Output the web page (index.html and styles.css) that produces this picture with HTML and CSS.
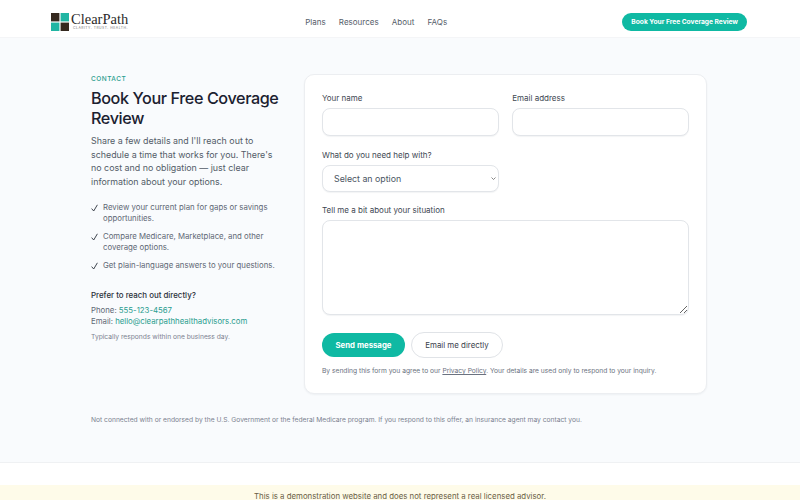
FILE: index.html
```html
<!DOCTYPE html>
<html lang="en">
<head>
<meta charset="utf-8">
<title>ClearPath</title>
<link rel="stylesheet" href="styles.css">
</head>
<body>
<header class="site-header">
  <a class="logo" href="#">
    <svg class="logo-mark" width="18" height="18" viewBox="0 0 18 18" aria-hidden="true">
      <rect x="0" y="0" width="8.4" height="8.4" fill="#35291f"/>
      <rect x="9.6" y="0" width="8.4" height="8.4" fill="#21b5a3"/>
      <rect x="0" y="9.6" width="8.4" height="8.4" fill="#21b5a3"/>
      <rect x="9.6" y="9.6" width="8.4" height="8.4" fill="#35291f"/>
    </svg>
    <span class="logo-text">
      <span class="logo-name">ClearPath</span>
      <span class="logo-tag">CLARITY. TRUST. HEALTH.</span>
    </span>
  </a>
  <nav class="nav">
    <a href="#">Plans</a>
    <a href="#">Resources</a>
    <a href="#">About</a>
    <a href="#">FAQs</a>
  </nav>
  <a class="header-cta" href="#">Book Your Free Coverage Review</a>
</header>
<main class="main">
  <div class="columns">
    <section class="intro">
      <div class="eyebrow">CONTACT</div>
      <h1>Book Your Free Coverage Review</h1>
      <p class="lead">Share a few details and I'll reach out to schedule a time that works for you. There's no cost and no obligation — just clear information about your options.</p>
      <ul class="checks">
        <li><svg class="tick" width="7" height="8" viewBox="0 0 7 8" aria-hidden="true"><path d="M0.6 4.6 L2.7 7 L6.4 0.8"/></svg><span>Review your current plan for gaps or savings opportunities.</span></li>
        <li><svg class="tick" width="7" height="8" viewBox="0 0 7 8" aria-hidden="true"><path d="M0.6 4.6 L2.7 7 L6.4 0.8"/></svg><span>Compare Medicare, Marketplace, and other coverage options.</span></li>
        <li><svg class="tick" width="7" height="8" viewBox="0 0 7 8" aria-hidden="true"><path d="M0.6 4.6 L2.7 7 L6.4 0.8"/></svg><span>Get plain-language answers to your questions.</span></li>
      </ul>
      <div class="direct-title">Prefer to reach out directly?</div>
      <div class="direct">Phone: <a href="#">555-123-4567</a></div>
      <div class="direct">Email: <a href="#">hello@clearpathhealthadvisors.com</a></div>
      <div class="responds">Typically responds within one business day.</div>
    </section>
    <form class="card">
      <div class="row">
        <label class="field"><span>Your name</span><input type="text"></label>
        <label class="field"><span>Email address</span><input type="email"></label>
      </div>
      <div class="row">
        <label class="field"><span>What do you need help with?</span>
          <div class="select-wrap">
            <select><option>Select an option</option></select>
            <svg class="chevron" width="5" height="3" viewBox="0 0 5 3" aria-hidden="true"><path d="M0.5 0.5 L2.5 2.5 L4.5 0.5"/></svg>
          </div>
        </label>
      </div>
      <label class="field"><span>Tell me a bit about your situation</span><textarea></textarea></label>
      <div class="actions">
        <button type="button" class="btn-primary">Send message</button>
        <button type="button" class="btn-secondary">Email me directly</button>
      </div>
      <p class="note">By sending this form you agree to our <a href="#">Privacy Policy</a>. Your details are used only to respond to your inquiry.</p>
    </form>
  </div>
  <p class="disclaimer">Not connected with or endorsed by the U.S. Government or the federal Medicare program. If you respond to this offer, an insurance agent may contact you.</p>
</main>
<div class="spacer"></div>
<div class="demo-banner">This is a demonstration website and does not represent a real licensed advisor.</div>
</body>
</html>
```
FILE: styles.css
```css
* { box-sizing: border-box; }
html, body { margin: 0; height: 500px; overflow: hidden; }
body { font-family: Inter, "Liberation Sans", sans-serif; color: #1f2630; background: #fff; }
a { text-decoration: none; color: inherit; }

.site-header { height: 38px; padding: 7px 53px 0 51px; display: flex; align-items: center; justify-content: space-between; background: #fff; border-bottom: 1px solid #f4f5f7; }
.logo { display: flex; align-items: center; gap: 2px; width: 79px; flex: none; }
.logo-mark { flex: none; }
.logo-text { display: flex; flex-direction: column; white-space: nowrap; }
.logo-name { font-family: "Liberation Serif", serif; font-size: 14.5px; line-height: 13px; color: #2b2a2a; }
.logo-tag { font-family: Inter, sans-serif; font-size: 3.4px; line-height: 5px; letter-spacing: .5px; color: #777; padding-left: 2px; }
.nav { display: flex; gap: 13.2px; font-size: 8px; color: #555d69; }
.header-cta { height: 18px; padding: 0 9px; display: flex; align-items: center; border-radius: 9px; background: #0fb9a3; color: #fff; font-size: 6.65px; font-weight: 700; }

.main { height: 425px; padding: 36px 93px 0 91px; background: #f9fbfd; border-bottom: 1px solid #eff1f3; }
.columns { display: grid; grid-template-columns: 190px 403px; gap: 23px; align-items: start; }
.intro { padding-top: 1px; }
.eyebrow { font-size: 6.5px; line-height: 8px; letter-spacing: .5px; font-weight: 500; color: #2a9d8f; }
h1 { margin: 5px 0 0; font-size: 16.2px; line-height: 20px; font-weight: 500; letter-spacing: -.4px; color: #1b2130; }
.lead { margin: 6px 0 0; font-size: 8.9px; line-height: 13.5px; color: #535b68; }
.checks { list-style: none; margin: 14px 0 0; padding: 0; font-size: 7.8px; line-height: 11px; color: #5f6875; }
.checks li { display: flex; gap: 5px; margin-bottom: 7px; }
.tick { flex: none; margin-top: 2px; fill: none; stroke: #2b323c; stroke-width: .9; }
.direct-title { margin-top: 19px; font-size: 7.9px; line-height: 11px; font-weight: 500; color: #2a303a; }
.direct { font-size: 7.8px; line-height: 11px; color: #5f6875; }
.direct-title + .direct { margin-top: 4px; }
.direct a { color: #2a9d8f; }
.responds { margin-top: 5px; font-size: 6.7px; line-height: 10px; color: #7b8290; }

.card { height: 320px; padding: 18px 17px 17px; background: #fff; border: 1px solid #eceef1; border-radius: 10px; box-shadow: 0 1px 2px rgba(20,30,50,.05); }
.row { display: grid; grid-template-columns: 1fr 1fr; gap: 13.5px; margin-bottom: 13px; }
.row:first-child { margin-bottom: 14px; }
.field { display: block; font-size: 8px; line-height: 10px; color: #404752; }
.field span { display: block; margin-bottom: 5px; }
input, select, textarea { display: block; width: 100%; font-family: inherit; background: #fff; border: 1px solid #e2e5e9; border-radius: 8px; box-shadow: 0 1px 1px rgba(20,30,50,.05); }
input { height: 28px; }
.select-wrap { position: relative; }
select { appearance: none; height: 27px; padding: 0 11px; font-size: 8.8px; color: #4b5563; }
.chevron { position: absolute; right: 3px; top: 12px; fill: none; stroke: #555; stroke-width: .7; }
textarea { height: 95px; }
.actions { display: flex; align-items: center; gap: 6px; margin-top: 17px; }
button { font-family: inherit; border-radius: 13px; }
.btn-primary { width: 83px; height: 24px; padding: 0; border: 0; background: #0fb9a3; color: #fff; font-size: 7.8px; font-weight: 700; }
.btn-secondary { width: 92px; height: 26px; padding: 0; border: 1px solid #e0e3e7; background: #fff; color: #39404b; font-size: 7.9px; }
.note { margin: 8px 0 0; font-size: 6.68px; line-height: 10px; color: #6b7280; }
.note a { text-decoration: underline; }

.disclaimer { margin: 21px 0 0; font-size: 6.7px; line-height: 10px; color: #7b8290; }
.spacer { height: 22px; background: #fff; }
.demo-banner { height: 15px; padding-top: 6px; background: #fefbe9; text-align: center; font-size: 7.84px; line-height: 10px; color: #6b5e45; }
```
